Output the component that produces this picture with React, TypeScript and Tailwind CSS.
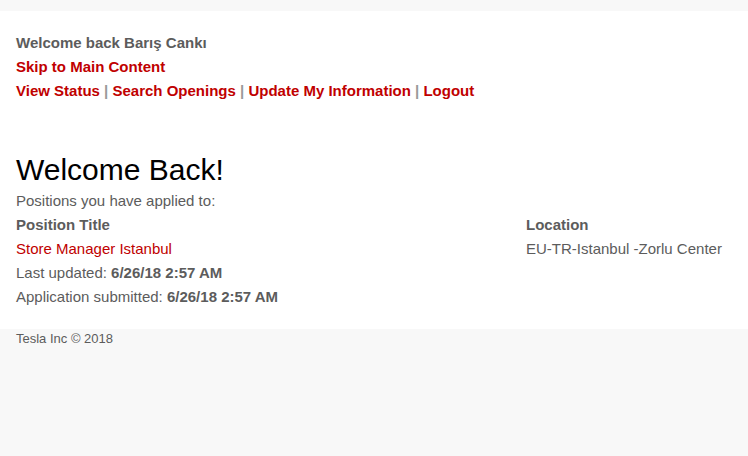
export default function App() {
    return (
        <div className="min-h-[456px] bg-[#f8f8f8] font-['Liberation_Sans',Arial,sans-serif] text-[#5c5c5c] pt-[11px]">
            <div className="bg-white px-4 pt-[20px] pb-[20px]">
                <div className="text-[15px] leading-6 font-bold">
                    <p>Welcome back Barış Cankı</p>
                    <p>
                        <a href="#main" className="text-[#c00000]">Skip to Main Content</a>
                    </p>
                    <p className="text-[#999]">
                        <a href="#" className="text-[#c00000]">View Status</a> |{" "}
                        <a href="#" className="text-[#c00000]">Search Openings</a> |{" "}
                        <a href="#" className="text-[#c00000]">Update My Information</a> |{" "}
                        <a href="#" className="text-[#c00000]">Logout</a>
                    </p>
                </div>

                <main id="main" className="mt-[49px]">
                    <h1 className="text-[30px] leading-9 text-black">Welcome Back!</h1>
                    <p className="text-[15px] leading-6 mt-[1px]">Positions you have applied to:</p>
                    <div className="flex text-[15px] leading-6">
                        <div className="w-[510px]">
                            <p className="font-bold">Position Title</p>
                            <p>
                                <a href="#" className="text-[#c00000]">Store Manager Istanbul</a>
                            </p>
                            <p>Last updated: <b>6/26/18 2:57 AM</b></p>
                            <p>Application submitted: <b>6/26/18 2:57 AM</b></p>
                        </div>
                        <div>
                            <p className="font-bold">Location</p>
                            <p>EU-TR-Istanbul -Zorlu Center</p>
                        </div>
                    </div>
                </main>
            </div>
            <footer className="px-4 text-[13px] leading-5">Tesla Inc © 2018</footer>
        </div>
    );
}
